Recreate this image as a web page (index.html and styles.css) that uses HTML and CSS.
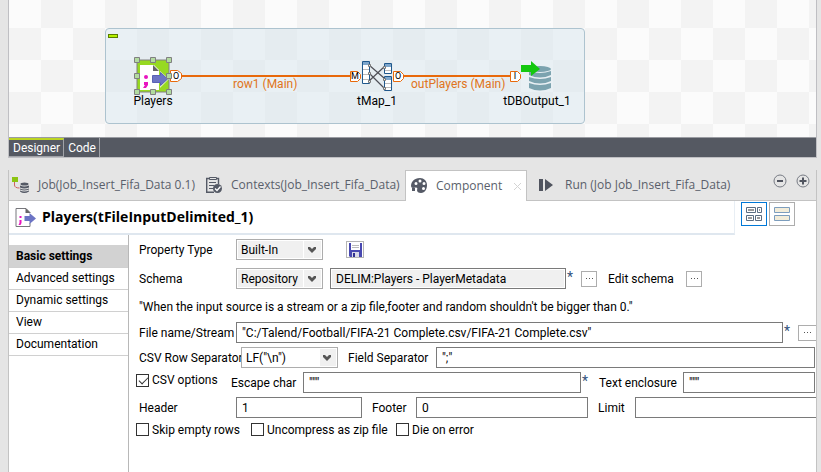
FILE: index.html
```html
<!DOCTYPE html>
<html lang="en">
<head>
<meta charset="utf-8">
<title>Job_Insert_Fifa_Data</title>
<link rel="stylesheet" href="styles.css">
</head>
<body>
<svg class="defs" width="0" height="0" aria-hidden="true">
  <symbol id="chevron" viewBox="0 0 8 6"><path d="M0 0h2l2 2 2-2h2v2L4 6 0 2z" fill="#555"/></symbol>
  <symbol id="arrow-file" viewBox="0 0 20 19">
    <path d="M14.500 5V4.500L10.500.500H.5v18h14V15" fill="#fff" stroke="#77777c"/>
    <path d="M10 0l5 5h-5z" fill="#666"/>
    <path d="M4 8h2v2H4zM4 12h2v3l-1 2H3l1-2z" fill="#e815c0"/>
    <path d="M9 8h5V5l6.500 5.500L14 16v-3H9z" fill="#6c74c4"/>
  </symbol>
</svg>
<main class="workbench">
  <section class="editor">
    <div class="canvas">
      <div class="subjob"><span class="collapse"></span></div>
      <svg class="links" width="600" height="137" viewBox="0 0 600 137" fill="none" stroke="#e8690b">
        <path d="M171 76h172M395 76h107" stroke-width="2"/>
        <g fill="#fff">
          <path d="M161.500 70.500h7l4 3v5l-4 3h-7z"/>
          <path d="M341.500 71.500h7l3 3v4l-3 3h-7z"/>
          <path d="M384.500 71.500h7l3 3v4l-3 3h-7z"/>
          <path d="M501.500 71.500h7l3 3v4l-3 3h-7z"/>
        </g>
      </svg>
      <span class="port port-row">O</span>
      <span class="port port-map-in">M</span>
      <span class="port port-map-out">O</span>
      <span class="port port-db">I</span>
      <span class="link-label label-row">row1 (Main)</span>
      <span class="link-label label-out">outPlayers (Main)</span>
      <figure class="node node-players">
        <svg width="38" height="38" viewBox="0 0 38 38">
          <rect x="3" y="3" width="32" height="32" fill="#97d921" stroke="#808080"/>
          <path d="M6 8h14l5 5v20H6z" fill="#fff"/>
          <path d="M19 8l6 6h-6z" fill="#666"/>
          <path d="M26 14l9 8-9 9z" fill="#fff" opacity=".7"/>
          <path d="M18.500 18.500h8v-3l7 6.500-7 6.500v-3h-8z" fill="#6c74c4" stroke="#5a62b4"/>
          <circle cx="12" cy="20" r="2" fill="#e815c0"/><path d="M10 25h4v3l-2 3h-3l2-3h-1z" fill="#e815c0"/>
          <g fill="#b2dba0" stroke="#808080"><path d="M.5.500h5v5h-5zM16.500.500h5v5h-5zM32.500.500h5v5h-5zM.5 16.500h5v5h-5zM32.500 16.500h5v5h-5zM.5 32.500h5v5h-5zM16.500 32.500h5v5h-5zM32.500 32.500h5v5h-5z"/></g>
        </svg>
        <figcaption>Players</figcaption>
      </figure>
      <figure class="node node-map">
        <svg width="32" height="38" viewBox="0 0 32 38">
          <g fill="#fff" stroke="#20588c"><path d="M1.500 4.500h7v22h-7zM23.500 6.500h7v10h-7zM23.500 19.500h7v14h-7z"/></g>
          <path d="M2 5h6v3H2zM24 7h6v3h-6zM24 20h6v3h-6z" fill="#7da6cc"/>
          <path d="M2 12.500h6M2 17.500h6M2 22.500h6M24 13.500h6M24 26.500h6M24 30.500h6" stroke="#bbb"/>
          <path d="M8 8l15 13M8 16l15 15M8 24l15-14" fill="none" stroke="#505057" stroke-width="1.200"/>
          <g fill="#eee" stroke="#777"><path d="M7.500 7.500h2v2h-2zM7.500 15.500h2v2h-2zM7.500 23.500h2v2h-2zM22.500 9.500h2v2h-2zM22.500 21.500h2v2h-2zM22.500 30.500h2v2h-2z"/></g>
        </svg>
        <figcaption>tMap_1</figcaption>
      </figure>
      <figure class="node node-db">
        <svg width="32" height="38" viewBox="0 0 32 38">
          <g fill="#7ca3af"><ellipse cx="19" cy="12" rx="11" ry="3"/>
            <path d="M8 14q11 4 22 0v4q-11 5-22 0zM8 20q11 4 22 0v4q-11 5-22 0zM8 26q11 4 22 0v5q-11 5-22 0z"/></g>
          <path d="M0 8h10V4l9 8-9 7v-4H0z" fill="#14c80f"/>
        </svg>
        <figcaption>tDBOutput_1</figcaption>
      </figure>
    </div>
    <nav class="page-tabs"><button class="page-tab current">Designer</button><button class="page-tab">Code</button></nav>
  </section>

  <section class="views">
    <header class="tabs">
      <button class="tab tab-job">
        <svg width="18" height="18" viewBox="0 0 18 18"><path d="M0 1h6v5H0z" fill="#8cc412"/><path d="M2.500 6v3q0 3 5 3" fill="none" stroke="#d06060"/><g fill="#555a66"><ellipse cx="12.500" cy="8" rx="4" ry="1.500"/><path d="M8 9.500q4 2 9 0v2q-5 2-9 0zM8 12.500q4 2 9 0v1q-5 2-9 0zM8 14.500q4 2 9 0v1q-5 3-9 0z"/></g></svg>
        Job(Job_Insert_Fifa_Data 0.1)</button>
      <button class="tab tab-contexts">
        <svg width="18" height="18" viewBox="0 0 18 18" fill="none" stroke="#555a66"><path d="M5 2.500H1.700v13.800H9M11 2.500h2.500V8" stroke-width="1.400"/><path d="M4.500 1.500h7v2h-7zM4 6.500h7M4 9.500h5M4 12.500h4"/><circle cx="12.500" cy="12.500" r="4.500" fill="#555a66" stroke="none"/><path d="M10 12.500l2 2 3.500-4" stroke="#fff" stroke-width="1.300"/></svg>
        Contexts(Job_Insert_Fifa_Data)</button>
      <button class="tab tab-component current">
        <svg width="18" height="18" viewBox="0 0 18 18"><path fill="#555a66" fill-rule="evenodd" d="M10 1C4 1 1 5 1 9q0 2 2 2l3-.5q2 0 1 2.500 0 3 4 3c4 0 6-4 6-8 0-4-3-7-7-7zM6 5a1.500 1.500 0 1 1 0 3 1.500 1.500 0 0 1 0-3zm4-2.500a1.500 1.500 0 1 1 0 3 1.500 1.500 0 0 1 0-3zM14 5a1.500 1.500 0 1 1 0 3 1.500 1.500 0 0 1 0-3zm-.5 5a1.500 1.500 0 1 1 0 3 1.500 1.500 0 0 1 0-3z"/><path d="M2 11h3v3H2z" fill="#555a66"/></svg>
        <span>Component</span>
        <svg class="close" width="9" height="9" viewBox="0 0 9 9" stroke="#d4d4d4"><path d="M1 1l7 7M8 1L1 8"/></svg></button>
      <button class="tab tab-run">
        <svg width="18" height="18" viewBox="0 0 18 18" fill="#50545f"><path d="M0 3h4v12H0zM6 3l8 6-8 6z"/></svg>
        Run (Job Job_Insert_Fifa_Data)</button>
      <span class="view-tools">
        <button aria-label="Minimize"><svg width="14" height="14" viewBox="0 0 14 14" fill="none"><circle cx="7" cy="7" r="6" stroke="#777b84"/><path d="M4 7h6" stroke="#50545f" stroke-width="2"/></svg></button>
        <button aria-label="Maximize"><svg width="14" height="14" viewBox="0 0 14 14" fill="none"><circle cx="7" cy="7" r="6" stroke="#777b84"/><path d="M3.500 7h7M7 3.500v7" stroke="#50545f" stroke-width="2"/></svg></button>
      </span>
    </header>
    <div class="heading">
      <h1><svg width="21" height="19"><use href="#arrow-file"/></svg>Players(tFileInputDelimited_1)</h1>
      <button class="layout on" aria-label="Table layout"><svg width="16" height="14" viewBox="0 0 16 14" stroke="#5a6d82"><path d="M.5.500h9v5h-9zM11.500.500h4v5h-4zM.5 8.500h7v5h-7zM9.500 8.500h6v5h-6z" fill="#fff"/><path d="M2 3h6M13 3h1M2 11h4M11 11h3" stroke="#999" stroke-width="2"/></svg></button>
      <button class="layout" aria-label="List layout"><svg width="16" height="14" viewBox="0 0 16 14" fill="#f2ecd9" stroke="#7c9dbd"><path d="M.5.500h15v5H.5zM.5 8.500h15v5H.5z"/></svg></button>
    </div>
    <div class="body">
      <nav class="sections">
        <a href="#basic" class="current">Basic settings</a>
        <a href="#advanced">Advanced settings</a>
        <a href="#dynamic">Dynamic settings</a>
        <a href="#view">View</a>
        <a href="#documentation">Documentation</a>
      </nav>
      <form class="settings" id="basic">
        <div class="row spaced">
          <label class="first" for="ptype">Property Type</label>
          <span class="combo grey"><select id="ptype"><option>Built-In</option></select><svg width="8" height="6"><use href="#chevron"/></svg></span>
          <button type="button" class="save" aria-label="Save"><svg width="13" height="14" viewBox="0 0 13 14"><path d="M0 0h13v14H1l-1-1z" fill="#4848b0"/><path d="M2 0h9v7H2z" fill="#fff"/><path d="M3 2.500h7M3 4.500h7" stroke="#bbb"/><path d="M3 9h7v5H3z" fill="#d8d8e8"/><path d="M4 10h2v4H4z" fill="#303090"/></svg></button>
        </div>
        <div class="row spaced">
          <label class="first" for="schema">Schema</label>
          <span class="combo grey"><select id="schema"><option>Repository</option></select><svg width="8" height="6"><use href="#chevron"/></svg></span>
          <input class="schema-name" aria-label="Schema name" readonly value="DELIM:Players - PlayerMetadata">
          <span class="star">*</span>
          <button type="button" class="more" aria-label="Browse schema"><i></i></button>
          <label class="edit-label" for="edit">Edit schema</label>
          <button type="button" class="more" id="edit"><i></i></button>
        </div>
        <p class="hint">"When the input source is a stream or a zip file,footer and random shouldn't be bigger than 0."</p>
        <div class="row">
          <label class="first" for="file">File name/Stream</label>
          <input class="grow" id="file" value="&quot;C:/Talend/Football/FIFA-21 Complete.csv/FIFA-21 Complete.csv&quot;">
          <span class="star">*</span>
          <button type="button" class="more cut" aria-label="Browse file"><i></i></button>
        </div>
        <div class="row">
          <label class="row-sep" for="rowsep">CSV Row Separator</label>
          <span class="combo wide"><select id="rowsep"><option>LF("\n")</option></select><svg width="8" height="6"><use href="#chevron"/></svg></span>
          <label class="field-sep" for="fieldsep">Field Separator</label>
          <input class="grow end" id="fieldsep" value="&quot;;&quot;">
        </div>
        <div class="row">
          <label class="check csv"><input type="checkbox" checked>CSV options</label>
          <label class="escape" for="escape">Escape char</label>
          <input class="grow" id="escape" value="&quot;&quot;&quot;">
          <span class="star">*</span>
          <label class="enclosure" for="enclosure">Text enclosure</label>
          <input class="enclosure-box end" id="enclosure" value="&quot;&quot;&quot;">
        </div>
        <div class="row">
          <label class="first" for="head">Header</label>
          <input class="header-box" id="head" value="1">
          <label class="footer" for="foot">Footer</label>
          <input class="grow" id="foot" value="0">
          <label class="limit" for="limit">Limit</label>
          <input class="limit-box" id="limit">
        </div>
        <div class="row checks">
          <label class="check skip"><input type="checkbox">Skip empty rows</label>
          <label class="check zip"><input type="checkbox">Uncompress as zip file</label>
          <label class="check"><input type="checkbox">Die on error</label>
        </div>
      </form>
    </div>
  </section>
</main>
</body>
</html>
```
FILE: styles.css
```css
* { box-sizing: border-box; }
body {
  margin: 0;
  background: #e5e5e5;
  color: #000;
  font: 12px/16px Roboto, "Noto Sans", sans-serif;
}
button, input, select { font: inherit; color: inherit; margin: 0; padding: 0; border: 0; border-radius: 0; background: none; }
svg { display: block; flex: none; }
.defs { position: absolute; }
.workbench { display: flex; flex-direction: column; gap: 12px; min-height: 100vh; padding: 0 4px 0 8px; }

.editor { border: solid #bfbfc3; border-width: 0 1px 1px; }
.canvas {
  position: relative;
  height: 137px;
  overflow: hidden;
  background: repeating-conic-gradient(#f3f3f3 0 25%, #fbfbfb 0 50%) 0 -4px / 64px 64px;
}
.subjob {
  position: absolute; left: 96px; top: 28px; width: 480px; height: 96px;
  border: 1px solid #adc3cf; border-radius: 4px; background: rgba(215, 230, 238, .5);
}
.collapse { position: absolute; left: 2px; top: 5px; width: 10px; height: 4px; border: 1px solid #5a7d00; background: #b5f000; }
.links { position: absolute; left: 0; top: 0; }
.port { position: absolute; top: 71px; width: 10px; font-size: 9px; line-height: 11px; text-align: center; }
.port-row { left: 162px; }
.port-map-in { left: 341px; }
.port-map-out { left: 384px; }
.port-db { left: 501px; }
.link-label { position: absolute; top: 76px; color: #e07420; white-space: nowrap; }
.label-row { left: 224px; }
.label-out { left: 402px; }
.node { position: absolute; top: 57px; margin: 0; display: flex; flex-direction: column; align-items: center; width: 90px; }
.node figcaption { line-height: 12px; }
.node-players { left: 99px; }
.node-map { left: 323px; }
.node-db { left: 483px; }

.page-tabs { display: flex; height: 20px; background: #555962; border-top: 1px solid #9a9ca2; }
.page-tab { padding: 0 3px 0 4px; color: #fff; border-right: 1px solid #a0a2a7; line-height: 18px; }
.page-tab.current { border-top: 2px solid #bcd522; border-bottom: 1px solid #a0a2a7; line-height: 14px; }

.views { flex: 1; display: flex; flex-direction: column; border: solid #c3c3c3; border-width: 0 1px; background: #fff; }
.tabs { display: flex; height: 31px; background: #e5e5e5; border-bottom: 1px solid #c3c3c3; font-family: "Open Sans", sans-serif; }
.tab { display: flex; align-items: center; gap: 8px; padding: 0 0 0 5px; color: #5a5f6b; white-space: nowrap; }
.tab-job { flex: 0 0 191px; padding-left: 3px; }
.tab-contexts { flex: 0 0 205px; }
.tab-component { flex: 0 0 122px; padding-left: 4px; }
.tab-run { flex: 0 0 200px; padding-left: 12px; }
.tab.current { height: 31px; border: solid #c3c3c3; border-width: 1px 1px 0; background: #fff; }
.tab .close { margin-left: auto; margin-right: 4px; }
.view-tools { display: flex; align-items: center; gap: 9px; margin-left: auto; padding: 0 6px 8px 0; }

.heading { display: flex; gap: 2px; padding-right: 21px; height: 34px; align-items: flex-start; }
.heading h1 {
  flex: 1; display: flex; align-items: center; gap: 6px; height: 34px; margin: 0 4px 0 0; padding-left: 6px;
  border-bottom: 2px solid #dfe7ef; border-right: 1px solid #e8eef4; font: 700 14px/20px "Open Sans", sans-serif;
}
.layout { display: flex; align-items: center; justify-content: center; width: 26px; height: 24px; margin-top: 1px; border: 1px solid #adadad; background: #fff; }
.layout.on { border-color: #0078d7; }

.body { flex: 1; display: flex; }
.sections { flex: 0 0 120px; padding-top: 10px; border-right: 1px solid #b8b8b8; }
.sections a { display: block; height: 22px; padding-left: 7px; border-bottom: 1px solid #d0d0d0; line-height: 20px; color: inherit; text-decoration: none; }
.sections .current { height: 23px; background: #d2d2d2; font-weight: 700; line-height: 22px; }

.settings { flex: 1; min-width: 0; padding: 4px 0 0 7px; overflow: hidden; }
.row { display: flex; align-items: center; height: 21px; margin-bottom: 4px; }
.row.spaced { margin-bottom: 8px; }
.row > label { flex: none; padding-left: 3px; white-space: nowrap; }
.row > .first { width: 100px; }
.row > .row-sep { width: 105px; }
.row > .field-sep { width: 98px; padding-left: 10px; }
.row > .escape { width: 75px; }
.row > .enclosure { width: 87px; }
.row > .footer { width: 54px; padding-left: 10px; }
.row > .limit { width: 47px; padding-left: 10px; }
.row > .edit-label { width: 89px; padding-left: 11px; }
.row > .check { display: flex; align-items: center; gap: 3px; padding: 0; }
.row > .csv { width: 92px; align-self: flex-start; }
.row > .skip { width: 115px; }
.row > .zip { width: 145px; }
.row.checks { height: 15px; }
.row > input { height: 21px; min-width: 0; padding: 0 5px; border: 1px solid #7a7a7a; background: #fff; }
.row > .grow { flex: 1; }
.row > .end { margin-right: 1px; }
.row > .schema-name { flex: 0 1 236px; margin-left: 7px; background: #f0f0f0; box-shadow: inset 0 0 0 1px #fff; }
.header-box { flex: 0 0 126px; }
.enclosure-box { flex: 0 0 132px; }
.row > .limit-box { flex: 0 0 181px; border-right: 0; }
.star { flex: 0 0 15px; height: 21px; padding-left: 1px; color: #34547c; font-size: 14px; line-height: 18px; }
.combo { position: relative; flex: 0 0 87px; height: 21px; border: 1px solid #adadad; background: #fff; }
.combo.wide { flex-basis: 97px; }
.combo.grey { padding: 1px; }
.combo select { width: 100%; height: 100%; padding: 0 20px 0 4px; appearance: none; line-height: 16px; }
.combo.grey select { padding-left: 3px; background: linear-gradient(#fff, #fff) right 17px top 0 / 1px 100% no-repeat #f0f0f0; }
.combo.wide select { background: linear-gradient(#f0f0f0, #f0f0f0) right 1px top 1px / 16px 17px no-repeat; }
.combo svg { position: absolute; right: 6px; top: 7px; }
.save { display: flex; align-items: center; justify-content: center; width: 18px; height: 17px; margin-left: 23px; border: 1px solid #b5b5b5; }
.more { display: flex; justify-content: center; flex: 0 0 16px; height: 16px; border: 1px solid #adadad; background: #fff; }
.more i { width: 7px; height: 1px; margin-top: 6px; background: repeating-linear-gradient(90deg, #555 0 1px, transparent 1px 3px); }
.cut { flex-basis: 18px; border-right: 0; }
.hint { margin: 0; padding: 2px 0 7px 3px; white-space: nowrap; }
input[type="checkbox"] { appearance: none; width: 13px; height: 13px; border: 1px solid #333; background: #fff; }
input[type="checkbox"]:checked::before {
  content: ""; display: block; width: 8px; height: 4px; margin: 2px 0 0 2px;
  border: solid #333; border-width: 0 0 1px 1px; transform: rotate(-45deg);
}
```
